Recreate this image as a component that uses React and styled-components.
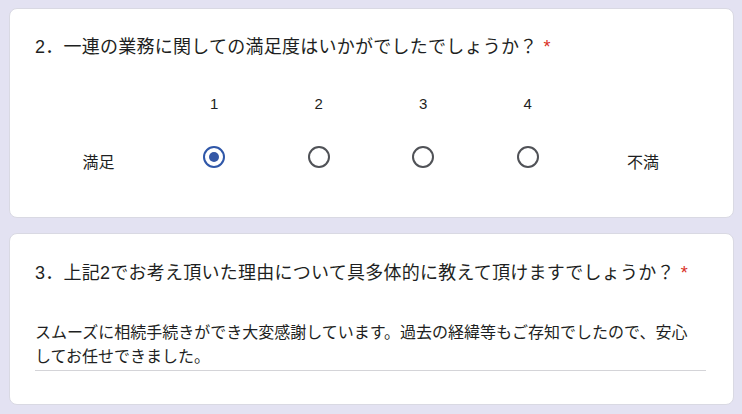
import React, { useState } from 'react';
import styled, { createGlobalStyle } from 'styled-components';

const GlobalStyle = createGlobalStyle`
  body {
    margin: 0;
    background-color: #e3e2f2;
    font-family: "Liberation Sans", "Noto Sans CJK JP", sans-serif;
    color: #1e1f22;
  }
`;

const Page = styled.div`
  display: flex;
  flex-direction: column;
  gap: 15px;
  padding: 8px 8px 9px 9px;
`;

const Card = styled.div`
  background-color: #ffffff;
  border: 1px solid #d9d9e3;
  border-radius: 8px;
  padding: ${props => props.$top}px 27px ${props => props.$bottom}px 25px;
`;

const QuestionTitle = styled.div`
  font-size: 18px;
  line-height: 24px;
  letter-spacing: 0.25px;
  white-space: nowrap;
`;

const Required = styled.span`
  color: #d93025;
  margin-left: 6px;
`;

const Scale = styled.div`
  display: flex;
  margin-top: 35px;
`;

const EndLabel = styled.div`
  width: ${props => props.$width};
  flex: ${props => props.$flex || 'none'};
  text-align: center;
  font-size: 16px;
  line-height: 20px;
  padding-top: 59px;
`;

const OptionColumn = styled.label`
  width: 104.5px;
  display: flex;
  flex-direction: column;
  align-items: center;
  gap: 32px;
  cursor: pointer;
`;

const OptionNumber = styled.span`
  font-size: 15px;
  line-height: 20px;
`;

const Radio = styled.span`
  box-sizing: border-box;
  width: 22px;
  height: 22px;
  border-radius: 50%;
  border: 2px solid ${props => props.$checked ? '#2f57a8' : '#505257'};
  display: flex;
  align-items: center;
  justify-content: center;

  &::after {
    content: '';
    width: 10px;
    height: 10px;
    border-radius: 50%;
    background-color: #3558a6;
    display: ${props => props.$checked ? 'block' : 'none'};
  }
`;

const Answer = styled.div`
  margin-top: 36px;
  font-size: 16px;
  line-height: 24px;
  padding: 0 8px 1px 0;
  border-bottom: 1px solid #d4d4d8;
`;

function App() {
  const [rating, setRating] = useState(1);

  return (
    <>
      <GlobalStyle />
      <Page>
        <Card $top={26} $bottom={44}>
          <QuestionTitle>
            2．一連の業務に関しての満足度はいかがでしたでしょうか？<Required>*</Required>
          </QuestionTitle>
          <Scale>
            <EndLabel $width="127px">満足</EndLabel>
            {[1, 2, 3, 4].map(n => (
              <OptionColumn key={n} onClick={() => setRating(n)}>
                <OptionNumber>{n}</OptionNumber>
                <Radio $checked={rating === n} />
              </OptionColumn>
            ))}
            <EndLabel $flex="1">不満</EndLabel>
          </Scale>
        </Card>

        <Card $top={27} $bottom={33}>
          <QuestionTitle>
            3．上記2でお考え頂いた理由について具多体的に教えて頂けますでしょうか？<Required>*</Required>
          </QuestionTitle>
          <Answer>
            スムーズに相続手続きができ大変感謝しています。過去の経緯等もご存知でしたので、安心してお任せできました。
          </Answer>
        </Card>
      </Page>
    </>
  );
}

export default App;
